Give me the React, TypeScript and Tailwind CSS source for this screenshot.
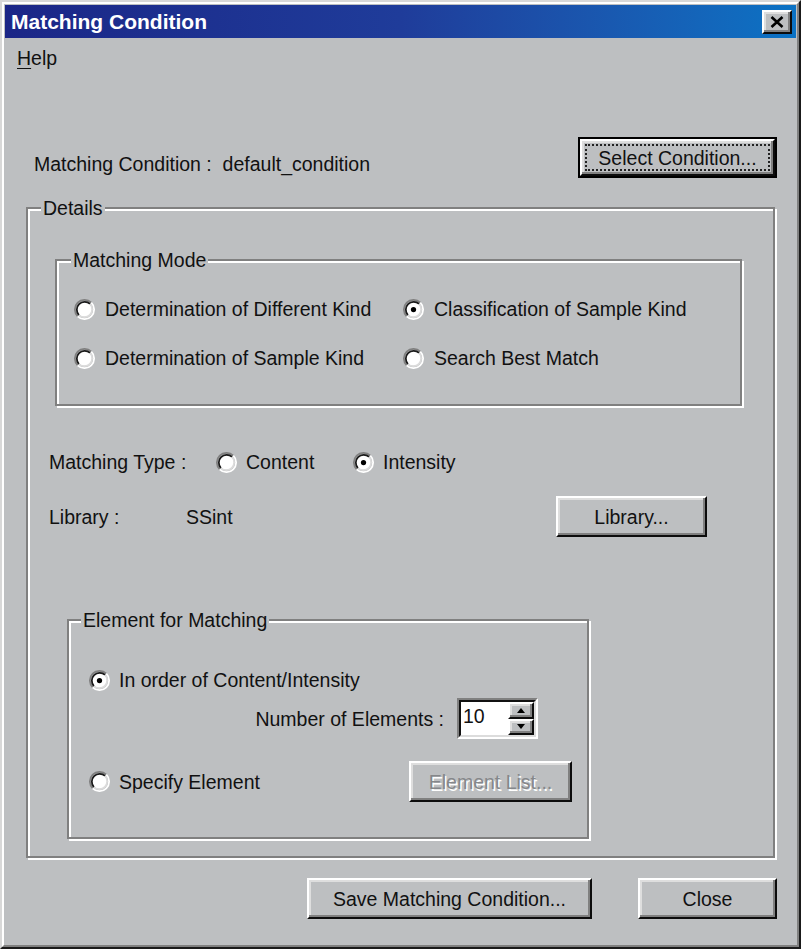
import React from "react";

const face = "bg-[#bdbfc1]";
const bevel =
  "border-2 border-t-white border-l-white border-r-[#0c0c0c] border-b-[#0c0c0c] shadow-[inset_-2px_-2px_0_#808080,inset_2px_2px_0_#dedede]";
const etched = "border-2 border-[#808080] shadow-[inset_2px_2px_0_#fff,2px_2px_0_#fff]";

function Radio({ checked = false }: { checked?: boolean }) {
  return (
    <svg width="21" height="21" viewBox="0 0 12 12" className="shrink-0">
      <path d="M2.11 9.89A5.5 5.5 0 0 1 9.89 2.11" fill="none" stroke="#808080" strokeWidth="1" />
      <path d="M9.89 2.11A5.5 5.5 0 0 1 2.11 9.89" fill="none" stroke="#ffffff" strokeWidth="1" />
      <circle cx="6" cy="6" r="4.2" fill="#fff" />
      <path d="M2.82 9.18A4.5 4.5 0 0 1 9.18 2.82" fill="none" stroke="#1a1a1a" strokeWidth="1" />
      <path d="M9.18 2.82A4.5 4.5 0 0 1 2.82 9.18" fill="none" stroke="#dcdcdc" strokeWidth="1" />
      {checked && <circle cx="6" cy="6" r="1.5" fill="#000" />}
    </svg>
  );
}

function Option({ label, checked, gap = "gap-[9px]" }: { label: string; checked?: boolean; gap?: string }) {
  return (
    <div className={`flex items-center ${gap}`}>
      <Radio checked={checked} />
      <span>{label}</span>
    </div>
  );
}

function Button({ label, className = "", disabled }: { label: string; className?: string; disabled?: boolean }) {
  return (
    <button
      className={`${bevel} ${face} h-[41px] flex items-center justify-center ${
        disabled ? "text-[#85878a] [text-shadow:1.5px_1.5px_0_#fff]" : ""
      } ${className}`}
    >
      {label}
    </button>
  );
}

function Group({
  title,
  className,
  legendClass,
  children,
}: {
  title: string;
  className: string;
  legendClass: string;
  children: React.ReactNode;
}) {
  return (
    <fieldset className={`${etched} min-w-0 ${className}`}>
      <legend className={`px-[2px] ${face} ${legendClass}`}>{title}</legend>
      {children}
    </fieldset>
  );
}

function Spin() {
  return (
    <div className="w-[81px] h-[41px] border-2 border-t-[#808080] border-l-[#808080] border-b-white border-r-white">
      <div className="h-full border-2 border-t-[#111] border-l-[#111] border-b-[#dcdcdc] border-r-[#dcdcdc] bg-white flex">
        <span className="flex-1 pl-[2px] pt-[2px]">10</span>
        <div className="w-[26px] flex flex-col">
          <div className={`flex-1 ${bevel} ${face} flex items-center justify-center`}>
            <svg width="8" height="5" viewBox="0 0 8 5">
              <path d="M4 0L8 5H0Z" fill="#000" />
            </svg>
          </div>
          <div className={`flex-1 ${bevel} ${face} flex items-center justify-center`}>
            <svg width="8" height="5" viewBox="0 0 8 5">
              <path d="M0 0H8L4 5Z" fill="#000" />
            </svg>
          </div>
        </div>
      </div>
    </div>
  );
}

export default function App() {
  return (
    <div
      className={`w-[801px] h-[949px] ${face} font-['Liberation_Sans',Arial,sans-serif] text-[19.5px] leading-[24px] text-[#111]`}
    >
      <div className="h-full border-2 border-t-[#d8d8d8] border-l-[#d8d8d8] border-r-[#1a1a1a] border-b-[#1a1a1a]">
        <div className="h-full border-2 border-t-white border-l-white border-r-[#808080] border-b-[#808080] p-[1px] flex flex-col">
          <div className="h-[33px] shrink-0 flex items-center justify-between pl-[6px] pr-[4px] bg-linear-to-r from-[#1b2687] via-[#1f3c9a] to-[#0a72c4]">
            <span className="font-bold text-white text-[21px]">Matching Condition</span>
            <button className={`w-[30px] h-[24px] ${bevel} ${face} flex items-center justify-center`}>
              <svg width="14" height="12" viewBox="0 0 14 12">
                <path d="M1.5 1L12.5 11M12.5 1L1.5 11" stroke="#000" strokeWidth="2.6" />
              </svg>
            </button>
          </div>

          <div className="h-[38px] shrink-0 pl-[12px] pt-[8px]">
            <span>
              <span className="underline underline-offset-[3px]">H</span>elp
            </span>
          </div>

          <div className="flex-1 pl-[21px] pr-[19px] pt-[61px]">
            <div className="flex items-end justify-between pl-[8px]">
              <span className="mb-[2px]">Matching Condition :&nbsp; default_condition</span>
              <div className="w-[199px] h-[41px] border-2 border-black">
                <button className={`w-full h-full ${bevel} ${face} p-[3px]`}>
                  <span className="h-full border-2 border-dotted border-[#222] flex items-center justify-center">
                    Select Condition...
                  </span>
                </button>
              </div>
            </div>

            <fieldset className={`mt-[18px] mr-[2px] ${etched} min-w-0 pb-[17px]`}>
              <legend className={`ml-[13px] px-[2px] ${face}`}>Details</legend>

              <Group
                title="Matching Mode"
                legendClass="ml-[14px]"
                className="mt-[28px] ml-[27px] w-[687px] pt-[25px] pb-[34px]"
              >
                <div className="pl-[17px] grid grid-cols-[329px_1fr] gap-y-[25px]">
                  <Option label="Determination of Different Kind" gap="gap-[10px]" />
                  <Option label="Classification of Sample Kind" gap="gap-[10px]" checked />
                  <Option label="Determination of Sample Kind" gap="gap-[10px]" />
                  <Option label="Search Best Match" gap="gap-[10px]" />
                </div>
              </Group>

              <div className="mt-[44px] pl-[21px] flex items-center">
                <span className="w-[167px] shrink-0">Matching Type :</span>
                <div className="w-[137px] shrink-0">
                  <Option label="Content" />
                </div>
                <Option label="Intensity" checked />
              </div>

              <div className="mt-[22px] pl-[21px] pr-[66px] flex items-center">
                <span className="w-[137px] shrink-0">Library :</span>
                <span className="flex-1">SSint</span>
                <Button label="Library..." className="w-[151px]" />
              </div>

              <Group
                title="Element for Matching"
                legendClass="ml-[12px]"
                className="mt-[71px] ml-[39px] w-[522px] pt-[36px] pb-[35px]"
              >
                <div className="pl-[20px]">
                  <Option label="In order of Content/Intensity" checked />
                </div>
                <div className="mt-[6px] pr-[49px] flex items-center justify-end gap-[13px]">
                  <span>Number of Elements :</span>
                  <Spin />
                </div>
                <div className="mt-[22px] pl-[20px] pr-[15px] flex items-center justify-between">
                  <Option label="Specify Element" />
                  <Button label="Element List..." className="w-[163px]" disabled />
                </div>
              </Group>
            </fieldset>

            <div className="mt-[20px] flex justify-end gap-[46px]">
              <Button label="Save Matching Condition..." className="w-[285px]" />
              <Button label="Close" className="w-[139px]" />
            </div>
          </div>
        </div>
      </div>
    </div>
  );
}
